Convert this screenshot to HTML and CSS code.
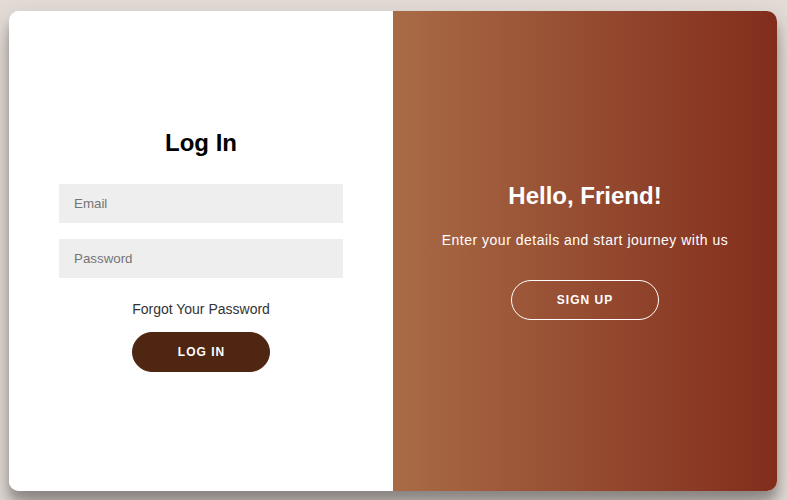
FILE: index.html
```html
<!DOCTYPE html>
<html lang="en">
<head>
<meta charset="utf-8">
<title>Log In</title>
<link rel="stylesheet" href="styles.css">
</head>
<body>
  <div class="container">
    <form class="panel form-panel" onsubmit="return false">
      <h1 class="title">Log In</h1>
      <input class="field" type="email" placeholder="Email">
      <input class="field" type="password" placeholder="Password">
      <a class="forgot" href="#">Forgot Your Password</a>
      <button class="btn btn-solid" type="submit">Log In</button>
    </form>
    <div class="panel overlay-panel">
      <h1 class="title title-light">Hello, Friend!</h1>
      <p class="lead">Enter your details and start journey with us</p>
      <button class="btn btn-ghost" type="button">Sign Up</button>
    </div>
  </div>
</body>
</html>
```

FILE: styles.css
```css
* { box-sizing: border-box; }

html, body { margin: 0; }

body {
  background: #e3dbd6;
  font-family: "Liberation Sans", Arial, sans-serif;
  height: 100vh;
  display: flex;
  align-items: flex-start;
  justify-content: flex-start;
  padding: 11px 0 0 9px;
}

.container {
  width: 768px;
  height: 480px;
  display: flex;
  background: #fff;
  border-radius: 10px;
  overflow: hidden;
  box-shadow: 0 14px 28px rgba(0, 0, 0, 0.25), 0 10px 10px rgba(0, 0, 0, 0.22);
}

.panel {
  width: 384px;
  height: 100%;
  display: flex;
  flex-direction: column;
  align-items: center;
  justify-content: center;
  padding: 0 50px;
  text-align: center;
}

.form-panel {
  background: #fff;
  justify-content: flex-start;
  padding-top: 118px;
}

.overlay-panel {
  background: linear-gradient(to right, #a96b46, #822d1c);
  color: #fff;
  padding: 0 40px;
}

.title {
  margin: 0 0 19px;
  font-size: 24px;
  font-weight: bold;
  line-height: 28px;
  color: #000;
}

.title-light { color: #fff; margin-bottom: 0; }

.field {
  width: 100%;
  background: #eee;
  border: none;
  padding: 12px 15px;
  margin: 8px 0;
  font-family: "Liberation Sans", Arial, sans-serif;
  font-size: 13.333px;
  line-height: 15px;
  height: 39px;
  outline: none;
}

.field::placeholder { color: #757575; }

.forgot {
  color: #333;
  font-size: 14px;
  line-height: 16px;
  text-decoration: none;
  margin: 15px 0;
}

.lead {
  font-size: 14px;
  font-weight: normal;
  line-height: 20px;
  letter-spacing: 0.5px;
  margin: 20px 0 30px;
}

.btn {
  border-radius: 20px;
  font-family: "Liberation Sans", Arial, sans-serif;
  font-size: 12px;
  font-weight: bold;
  line-height: 14px;
  padding: 12px 45px;
  letter-spacing: 1px;
  text-transform: uppercase;
  cursor: pointer;
  height: 40px;
}

.btn-solid {
  background: #4f2611;
  border: 1px solid #4f2611;
  color: #fff;
  padding-right: 44px;
}

.btn-ghost {
  background: transparent;
  border: 1px solid #fff;
  color: #fff;
}
```
